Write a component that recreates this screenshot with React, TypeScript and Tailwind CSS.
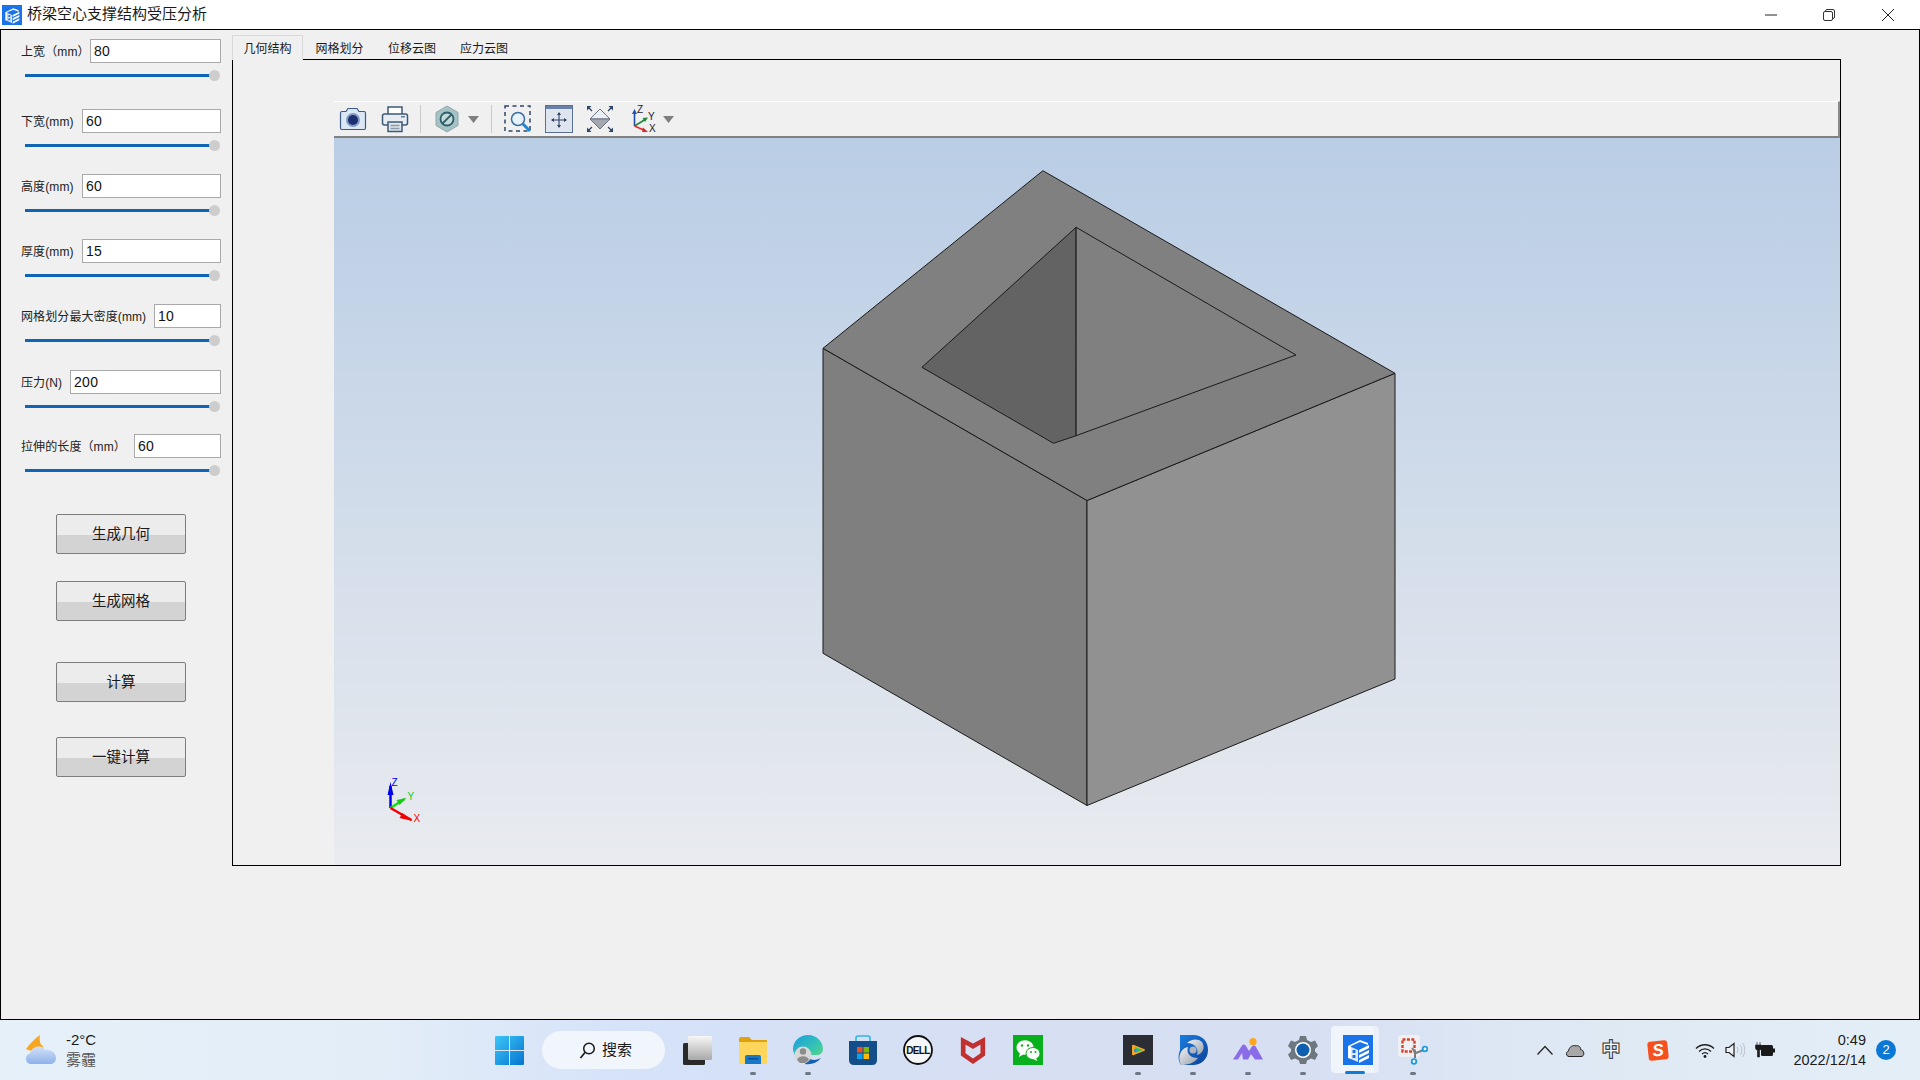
import React from "react";

const FONT = "font-['Liberation_Sans','Noto_Sans_CJK_SC',sans-serif]";

const rows = [
  { label: "上宽（mm）", value: "80", w: "w-[131px]", mt: "mt-[9px]" },
  { label: "下宽(mm)", value: "60", w: "w-[139px]", mt: "mt-[28px]" },
  { label: "高度(mm)", value: "60", w: "w-[139px]", mt: "mt-[23px]" },
  { label: "厚度(mm)", value: "15", w: "w-[139px]", mt: "mt-[23px]" },
  { label: "网格划分最大密度(mm)", value: "10", w: "w-[67px]", mt: "mt-[23px]" },
  { label: "压力(N)", value: "200", w: "w-[151px]", mt: "mt-[24px]" },
  { label: "拉伸的长度（mm）", value: "60", w: "w-[87px]", mt: "mt-[22px]" },
];

const buttons = [
  { label: "生成几何", mt: "mt-[38px]" },
  { label: "生成网格", mt: "mt-[27px]" },
  { label: "计算", mt: "mt-[41px]" },
  { label: "一键计算", mt: "mt-[35px]" },
];

function AppIcon({ className }: { className: string }) {
  return (
    <svg viewBox="0 0 30 30" className={className}>
      <rect width="30" height="30" fill="#1a73e8" />
      <path d="M5 11 L17 5 L25 8 L25 10 L17 7 L8 11 L8 24 L5 23 Z" fill="#fff" />
      <path d="M8 12 L15 15 L15 27 L8 24 Z" fill="#dbe9fb" />
      <rect x="9.5" y="15" width="3" height="3" fill="#1a73e8" />
      <rect x="9.5" y="20" width="3" height="3" fill="#1a73e8" />
      <path d="M16 15 L26 10 L26 13 L16 18 Z M16 20 L26 15 L26 18 L16 23 Z M16 25 L26 20 L26 23 L16 28 Z" fill="#fff" />
    </svg>
  );
}

function Row({ label, value, w, mt }: { label: string; value: string; w: string; mt: string }) {
  return (
    <div className={mt}>
      <div className="flex items-center justify-between">
        <span className="text-[12px] pt-[2px] tracking-[0.1px] text-[#222] whitespace-nowrap">{label}</span>
        <div className={`${w} h-[24px] border border-[#a9a9a9] bg-white pl-[3px] pt-[1px] flex items-center text-[14px] tracking-[0.3px] text-[#111]`}>{value}</div>
      </div>
      <div className="mt-[7px] ml-[4px] w-[195px] h-[11px] flex items-center">
        <div className="flex-1 h-[3px] bg-[#0f64b4]" />
        <div className="w-[11px] h-[11px] -ml-[3px] rounded-full bg-[#cdcdcd] shrink-0" />
      </div>
    </div>
  );
}

function Toolbar() {
  return (
    <div className="h-[37px] shrink-0 bg-[#f0f0f0] border-t border-t-white border-b-2 border-b-[#808080] border-r-2 border-r-[#8a8a8a] flex items-center">
      <svg viewBox="0 0 28 24" className="w-[28px] h-[24px] ml-[5px]">
        <path d="M1.5 6 Q1.5 4.5 3 4.5 L7 4.5 L9 1.5 L18 1.5 L20 4.5 L25 4.5 Q26.5 4.5 26.5 6 L26.5 21 Q26.5 22.5 25 22.5 L3 22.5 Q1.5 22.5 1.5 21 Z" fill="#dce7f4" stroke="#3d5a8a" strokeWidth="1.2" />
        <circle cx="14" cy="13" r="7" fill="#7e9cc6" />
        <circle cx="14" cy="13" r="5" fill="#1d2f70" />
      </svg>
      <svg viewBox="0 0 28 28" className="w-[28px] h-[28px] ml-[14px]">
        <path d="M7 9 L7 2 L21 2 L21 9" fill="#fff" stroke="#3d5a78" strokeWidth="1.5" />
        <rect x="1.5" y="9" width="25" height="11" rx="2" fill="#e8edf2" stroke="#3d5a78" strokeWidth="1.5" />
        <rect x="20" y="11" width="4" height="1.5" fill="#6b7f95" />
        <rect x="7" y="17" width="14" height="9.5" fill="#dfe5ea" stroke="#3d5a78" strokeWidth="1.5" />
        <path d="M9.5 20.5 H18.5 M9.5 23.5 H18.5" stroke="#8a9bad" strokeWidth="1.3" />
      </svg>
      <div className="w-px h-[28px] ml-[11px] bg-[#c9c9c9]" />
      <svg viewBox="0 0 24 28" className="w-[24px] h-[28px] ml-[14px]">
        <path d="M12 1 L23 7.5 L23 20.5 L12 27 L1 20.5 L1 7.5 Z" fill="#a5c2c4" stroke="#8fa9ab" />
        <circle cx="12" cy="14" r="6.5" fill="#c5d8da" stroke="#2f5f68" strokeWidth="1.8" />
        <path d="M7.5 18.5 L16.5 9.5" stroke="#2f5f68" strokeWidth="1.8" />
      </svg>
      <svg viewBox="0 0 11 7" className="w-[11px] h-[7px] ml-[9px]"><path d="M0 0 H11 L5.5 7 Z" fill="#7f7f7f" /></svg>
      <div className="w-px h-[28px] ml-[12px] bg-[#c9c9c9]" />
      <svg viewBox="0 0 27 28" className="w-[27px] h-[28px] ml-[12px]">
        <rect x="1" y="1" width="25" height="25" fill="none" stroke="#2e4468" strokeWidth="1.5" strokeDasharray="4 3.5" />
        <circle cx="14" cy="14" r="6.5" fill="#e8f2fb" stroke="#3a6ea5" strokeWidth="1.5" />
        <path d="M19 19 L26 26" stroke="#1f86d0" strokeWidth="3" />
      </svg>
      <svg viewBox="0 0 28 28" className="w-[28px] h-[28px] ml-[14px]">
        <rect x="0.5" y="0.5" width="27" height="27" fill="#dfe5ee" stroke="#5a6f94" />
        <rect x="1" y="1" width="26" height="3" fill="#6b82a8" />
        <path d="M14 8 V22 M7 15 H21" stroke="#2e4468" strokeWidth="1.1" />
        <path d="M14 7 L12 10 H16 Z M14 23 L12 20 H16 Z M6 15 L9 13 V17 Z M22 15 L19 13 V17 Z" fill="#2e4468" />
      </svg>
      <svg viewBox="0 0 28 28" className="w-[28px] h-[28px] ml-[13px]">
        <path d="M14 4 L24 14 L4 14 Z" fill="#eceff3" stroke="#6a7488" strokeWidth="1" />
        <path d="M4 14 L24 14 L14 24 Z" fill="#a4a8ae" stroke="#6a7488" strokeWidth="1" />
        <path d="M1 1 L5.5 1 L1 5.5 Z M27 1 L22.5 1 L27 5.5 Z M1 27 L5.5 27 L1 22.5 Z M27 27 L22.5 27 L27 22.5 Z" fill="#2e4468" />
        <path d="M2 2 L6 6 M26 2 L22 6 M2 26 L6 22 M26 26 L22 22" stroke="#2e4468" strokeWidth="1.3" />
      </svg>
      <svg viewBox="0 0 28 28" className="w-[28px] h-[28px] ml-[18px] overflow-visible">
        <path d="M2.5 21 V7" stroke="#1f4fb0" strokeWidth="1.6" />
        <path d="M2.5 4 L0 9 H5 Z" fill="#1f4fb0" />
        <path d="M2.5 21 L14 14" stroke="#1f8a3c" strokeWidth="1.6" />
        <path d="M16 12.5 L10.5 13 L13 17 Z" fill="#1f8a3c" />
        <path d="M2.5 21 L14 26" stroke="#e02a2a" strokeWidth="1.6" />
        <path d="M16 27 L11 22.5 L10 27 Z" fill="#e02a2a" />
        <text x="5" y="8" fontSize="10" fontFamily="Liberation Sans" fill="#222">Z</text>
        <text x="16" y="15" fontSize="10" fontFamily="Liberation Sans" fill="#222">Y</text>
        <text x="17" y="27" fontSize="10" fontFamily="Liberation Sans" fill="#222">X</text>
      </svg>
      <svg viewBox="0 0 11 7" className="w-[11px] h-[7px] ml-[3px]"><path d="M0 0 H11 L5.5 7 Z" fill="#7f7f7f" /></svg>
    </div>
  );
}

function Scene() {
  const line = { stroke: "#1a1a1a", strokeWidth: 1, strokeLinejoin: "round" as const };
  return (
    <svg viewBox="334 138 1505 727" className="block w-full flex-1 min-h-0 bg-[linear-gradient(#b9cde5,#e9ebef)]">
      <polygon points="822.5,348.3 1086.5,500.5 1086.5,805.5 822.5,653.3" fill="#7f7f7f" {...line} />
      <polygon points="1086.5,500.5 1394.5,373.3 1394.5,679 1086.5,805.5" fill="#919191" {...line} />
      <polygon points="1042.4,170.7 1394.5,373.3 1086.5,500.5 822.5,348.3" fill="#808080" {...line} />
      <polygon points="1075.6,227.3 921.4,367.3 1053,443.3 1075.6,435.7" fill="#636363" {...line} />
      <polygon points="1075.6,227.3 1295.5,355 1075.6,435.7" fill="#808080" {...line} />
      <path d="M390 808 V786" stroke="#0000f0" strokeWidth="2.5" />
      <path d="M390 782 L387 795 H393 Z" fill="#0000f0" />
      <path d="M390 808 L404 799" stroke="#10e010" strokeWidth="2.5" />
      <path d="M406 798 L396 800 L399 805 Z" fill="#10d010" />
      <path d="M390 808 L411 820" stroke="#f00000" strokeWidth="2.5" />
      <path d="M412 821 L402 813 L399 818 Z" fill="#f00000" />
      <text x="391" y="786" fontSize="10" fontFamily="Liberation Sans" fill="#0000f0">Z</text>
      <text x="407" y="800" fontSize="10" fontFamily="Liberation Sans" fill="#10d010">Y</text>
      <text x="413" y="822" fontSize="10" fontFamily="Liberation Sans" fill="#f00000">X</text>
    </svg>
  );
}

function Dot() {
  return <div className="absolute left-1/2 -translate-x-1/2 top-[52px] w-[6px] h-[3px] rounded-full bg-[#6d7684]" />;
}

function Slot({ children, dot }: { children?: React.ReactNode; dot?: boolean }) {
  return (
    <div className="relative w-[55px] h-[60px] flex items-center justify-center shrink-0">
      {children}
      {dot && <Dot />}
    </div>
  );
}

function TaskIcons() {
  return (
    <div className="flex ml-[13px]">
      <Slot dot>
        <svg viewBox="0 0 30 30" className="w-[30px] h-[30px]">
          <path d="M1 4 Q1 2 3 2 L11 2 L14 5 L29 5 L29 10 L1 10 Z" fill="#e0a20a" />
          <path d="M1 7 H29 V28 Q29 29 28 29 H2 Q1 29 1 28 Z" fill="#ffd65c" />
          <path d="M7 29 V22 Q7 20 9 20 H21 Q23 20 23 22 V29 Z" fill="#1878c8" />
          <rect x="10" y="23" width="10" height="1.5" fill="#0c4f90" />
        </svg>
      </Slot>
      <Slot dot>
        <svg viewBox="0 0 30 30" className="w-[30px] h-[30px]">
          <defs>
            <linearGradient id="edgeg" x1="0" y1="0" x2="1" y2="1"><stop offset="0" stopColor="#1b9de2" /><stop offset="0.6" stopColor="#36c5b0" /><stop offset="1" stopColor="#6fdc6e" /></linearGradient>
          </defs>
          <path d="M15 0 C24 0 30 7 30 14 C30 18 27 20 24 20 L14 20 L8 26 C2 22 0 17 0 14 C0 6 7 0 15 0 Z" fill="url(#edgeg)" />
          <path d="M12 29 C18 30 24 28 28 23 C22 26 18 25 15 23 Z" fill="#1560b0" />
          <circle cx="10" cy="20" r="8.5" fill="#d8d8d8" />
          <circle cx="10" cy="16.5" r="3.2" fill="#8c8c8c" />
          <path d="M4 25 C5 20 15 20 16 25 L12 28 L7 28 Z" fill="#8c8c8c" />
        </svg>
      </Slot>
      <Slot>
        <svg viewBox="0 0 30 30" className="w-[30px] h-[30px]">
          <path d="M8 7 V3 Q8 1 10 1 H20 Q22 1 22 3 V7" fill="none" stroke="#2db4ea" strokeWidth="1.6" />
          <path d="M1 6 H29 V25 Q29 30 24 30 H6 Q1 30 1 25 Z" fill="#134d8a" />
          <rect x="9" y="12" width="5.5" height="5.5" fill="#f25022" />
          <rect x="15.5" y="12" width="5.5" height="5.5" fill="#7fba00" />
          <rect x="9" y="18.5" width="5.5" height="5.5" fill="#00a4ef" />
          <rect x="15.5" y="18.5" width="5.5" height="5.5" fill="#ffb900" />
        </svg>
      </Slot>
      <Slot>
        <svg viewBox="0 0 30 30" className="w-[30px] h-[30px]">
          <circle cx="15" cy="15" r="14" fill="#f4f6f8" stroke="#111" strokeWidth="1.8" />
          <text x="15" y="18.5" textAnchor="middle" fontSize="10" fontWeight="700" fontFamily="Liberation Sans" fill="#111" letterSpacing="-0.6">DELL</text>
        </svg>
      </Slot>
      <Slot>
        <svg viewBox="0 0 30 30" className="w-[28px] h-[30px]">
          <path d="M2 1 L15 8 L28 1 L28 21 L15 30 L2 21 Z M7 9 L7 18.5 L15 24 L23 18.5 L23 9 L15 14 Z" fill="#c22f2f" fillRule="evenodd" />
        </svg>
      </Slot>
      <Slot>
        <svg viewBox="0 0 30 30" className="w-[30px] h-[30px]">
          <rect width="30" height="30" fill="#09b01e" />
          <ellipse cx="12" cy="12.5" rx="8.5" ry="7.3" fill="#fff" />
          <path d="M7 18 L6 22 L11 19 Z" fill="#fff" />
          <ellipse cx="20" cy="18.5" rx="7" ry="6" fill="#fff" stroke="#09b01e" />
          <path d="M23 23 L24.5 26 L20 24 Z" fill="#fff" />
          <circle cx="9" cy="10.5" r="1.2" fill="#09b01e" /><circle cx="15" cy="10.5" r="1.2" fill="#09b01e" />
          <circle cx="18" cy="17" r="1" fill="#09b01e" /><circle cx="22.5" cy="17" r="1" fill="#09b01e" />
        </svg>
      </Slot>
      <Slot />
      <Slot dot>
        <svg viewBox="0 0 30 30" className="w-[30px] h-[30px]">
          <rect width="30" height="30" fill="#2a2d33" />
          <path d="M9 11 Q9 9 11 10 L21 14 Q23 15 21 16 L11 20 Q9 21 9 19 Z" fill="#f5a623" />
          <path d="M12 12 L20 15 L12 18 Z" fill="#2fc36a" />
          <path d="M11 14 L15 15 L11 17 Z" fill="#2b8be8" />
        </svg>
      </Slot>
      <Slot dot>
        <svg viewBox="0 0 30 30" className="w-[30px] h-[30px]">
          <defs>
            <linearGradient id="swg" x1="0" y1="0" x2="1" y2="1"><stop offset="0" stopColor="#1b7fe0" /><stop offset="1" stopColor="#0d3f9a" /></linearGradient>
            <linearGradient id="swh" x1="0" y1="0" x2="1" y2="1"><stop offset="0" stopColor="#eef1f5" /><stop offset="1" stopColor="#9aa2ad" /></linearGradient>
          </defs>
          <path d="M2 0 H15 C25 0 30 7 30 15 C30 24 23 30 15 30 H3 C0 26 0 20 2 15 Z" fill="url(#swg)" />
          <path d="M3 30 C-1 22 3 13 10 12 C8 18 12 23 20 23 C16 28 10 30 3 30 Z" fill="url(#swh)" />
          <path d="M24 7 C28 13 24 19 19 20 C21 14 17 8 9 8 C13 4 20 3 24 7 Z" fill="url(#swh)" />
          <circle cx="15" cy="15" r="3.5" fill="#aeb5c0" />
        </svg>
      </Slot>
      <Slot dot>
        <svg viewBox="0 0 30 30" className="w-[30px] h-[30px]">
          <circle cx="20" cy="6.7" r="3.6" fill="#fba81b" />
          <path d="M0 24.5 L9 10.5 Q11 8.5 13 11 L16 16 L19 11.5 Q21 9.5 23 12 L30 24.5 L22 24.5 L18 19 L15 24.5 L10 24.5 L9 18 L5 24.5 Z" fill="#8b6ce8" />
        </svg>
      </Slot>
      <Slot dot>
        <svg viewBox="0 0 30 30" className="w-[30px] h-[30px]">
          <path d="M12 1 H18 L19 5 L23 7 L27 5.5 L30 11 L27 14 V16.5 L30 19.5 L27 25 L23 23.5 L19 25.5 L18 29 H12 L11 25.5 L7 23.5 L3 25 L0 19.5 L3 16.5 V14 L0 11 L3 5.5 L7 7 L11 5 Z" fill="#6e7680" />
          <circle cx="15" cy="15" r="8" fill="#fff" />
          <circle cx="15" cy="15" r="6.5" fill="#0f5fb0" />
        </svg>
      </Slot>
      <Slot>
        <div className="absolute top-[6px] left-[4px] w-[45px] h-[47px] rounded-[4px] bg-[#eaf0fa]" />
        <div className="absolute top-[6px] left-[1px] w-[43px] h-[47px] rounded-[4px] bg-[#f0f4fb]" />
        <AppIcon className="relative w-[30px] h-[30px]" />
        <div className="absolute left-[15px] top-[51px] w-[20px] h-[3px] rounded-full bg-[#0f7bd4]" />
      </Slot>
      <Slot dot>
        <svg viewBox="0 0 30 30" className="w-[30px] h-[30px]">
          <rect width="22" height="22" rx="3" fill="#eef0f3" />
          <rect x="4.5" y="4.5" width="12" height="12" fill="none" stroke="#d8402a" strokeWidth="2.4" strokeDasharray="3 1.4" />
          <path d="M14 13 L18 18 L28 14" fill="none" stroke="#7c7c7c" strokeWidth="2" />
          <path d="M17 16 L17 23" stroke="#7c7c7c" strokeWidth="2" />
          <circle cx="27" cy="14" r="2.3" fill="#fff" stroke="#1d9be0" strokeWidth="1.8" />
          <circle cx="16" cy="26.5" r="2.3" fill="#fff" stroke="#1d9be0" strokeWidth="1.8" />
        </svg>
      </Slot>
    </div>
  );
}

function Tray() {
  return (
    <div className="flex items-center ml-[97px] text-[#1a1a1a]">
      <svg viewBox="0 0 16 10" className="w-[16px] h-[10px]"><path d="M0.5 9.5 L8 1.5 L15.5 9.5" fill="none" stroke="#222" strokeWidth="1.2" /></svg>
      <svg viewBox="0 0 20 13" className="w-[20px] h-[13px] ml-[12px]">
        <path d="M4 12.5 C1 12.5 0.5 8 3.5 7 C4 3 8 0.5 11 2 C13 0.8 16 3 15.5 5.5 C19 5.5 20.5 12.5 16 12.5 Z" fill="#a8a8a8" stroke="#222" strokeWidth="1" />
      </svg>
      <span className="w-[17px] ml-[17px] text-[18px] leading-none text-white [-webkit-text-stroke:2.5px_#444] [paint-order:stroke_fill] text-center">中</span>
      <div className="w-[20px] h-[19px] ml-[29px] rounded-[3px] bg-[#f4511e] -rotate-6 flex items-center justify-center text-white text-[17px] font-bold italic leading-none">S</div>
      <svg viewBox="0 0 20 15" className="w-[20px] h-[15px] ml-[27px]">
        <path d="M1 5.5 C6 0.5 14 0.5 19 5.5 M4 8.5 C7.5 5 12.5 5 16 8.5 M7 11 C8.8 9.4 11.2 9.4 13 11" fill="none" stroke="#1d1d1d" strokeWidth="1.3" />
        <circle cx="10" cy="13.5" r="1.4" fill="#1d1d1d" />
      </svg>
      <svg viewBox="0 0 20 16" className="w-[20px] h-[16px] ml-[10px]">
        <path d="M1 5.5 H4 L9 1.5 V14.5 L4 10.5 H1 Z" fill="#eef3f9" stroke="#1d1d1d" strokeWidth="1.2" />
        <path d="M12 5 C13.3 6.5 13.3 9.5 12 11 M15 3 C17.5 5.5 17.5 10.5 15 13 M17.5 1 C20.5 5 20.5 11 17.5 15" fill="none" stroke="#b9bec6" strokeWidth="1" />
      </svg>
      <svg viewBox="0 0 20 16" className="w-[20px] h-[16px] ml-[10px]">
        <path d="M2 0 V3 M5 0 V3 M0.5 3 H6.5 V6 Q6.5 8 4.5 8 V15 H2.5 V8 Q0.5 8 0.5 6 Z" fill="#1a1a1a" stroke="#1a1a1a" strokeWidth="0.6" />
        <rect x="6" y="3" width="12" height="11" rx="1.5" fill="#1a1a1a" />
        <rect x="18" y="6.5" width="2" height="4" fill="#1a1a1a" />
      </svg>
      <div className="w-[80px] ml-[11px] text-right text-[14.5px] leading-[20px] text-[#1c1c1c]">
        <div>0:49</div>
        <div>2022/12/14</div>
      </div>
      <div className="w-[20px] h-[20px] ml-[10px] rounded-full bg-[#0b78d6] text-white text-[13px] flex items-center justify-center">2</div>
    </div>
  );
}

export default function App() {
  return (
    <div className={`${FONT} w-[1920px] h-[1080px] overflow-hidden flex flex-col bg-[#f0f0f0]`}>
      <div className="h-[29px] shrink-0 bg-white flex items-center text-[#1a1a1a]">
        <AppIcon className="w-[20px] h-[20px] ml-[2px]" />
        <span className="ml-[5px] text-[15px]">桥梁空心支撑结构受压分析</span>
        <svg viewBox="0 0 12 12" className="w-[12px] h-[12px] ml-auto"><path d="M0 6 H12" stroke="#222" strokeWidth="1" /></svg>
        <svg viewBox="0 0 12 12" className="w-[12px] h-[12px] ml-[46px]">
          <rect x="0.5" y="2.5" width="9" height="9" rx="1.5" fill="none" stroke="#333" />
          <path d="M2.5 2 V1.8 Q2.5 0.5 4 0.5 H10 Q11.5 0.5 11.5 2 V8 Q11.5 9.5 10 9.5" fill="none" stroke="#333" />
        </svg>
        <svg viewBox="0 0 12 12" className="w-[12px] h-[12px] ml-[47px] mr-[26px]"><path d="M0 0 L12 12 M12 0 L0 12" stroke="#222" strokeWidth="1" /></svg>
      </div>

      <div className="flex-1 min-h-0 border border-black flex">
        <div className="w-[231px] shrink-0 pl-[20px] pr-[11px]">
          {rows.map((r) => (
            <Row key={r.label} {...r} />
          ))}
          {buttons.map((b) => (
            <div
              key={b.label}
              className={`${b.mt} ml-[35px] w-[130px] h-[40px] pt-[2px] border border-[#7d7d7d] rounded-[2px] bg-[linear-gradient(#ececec_52%,#d3d3d3_52%)] flex items-center justify-center text-[14.5px] text-[#1a1a1a]`}
            >
              {b.label}
            </div>
          ))}
        </div>

        <div className="w-[1609px] shrink-0 pt-[5px]">
          <div className="h-[25px] flex relative text-[12px] text-[#1a1a1a]">
            <div className="w-[71px] h-[25px] pt-[2px] border border-[#d9d9d9] border-b-0 flex items-center justify-center relative z-10 bg-[#f0f0f0]">几何结构</div>
            <div className="w-[73px] pt-[2px] flex items-center justify-center">网格划分</div>
            <div className="w-[72px] pt-[2px] flex items-center justify-center">位移云图</div>
            <div className="w-[72px] pt-[2px] flex items-center justify-center">应力云图</div>
          </div>
          <div className="-mt-px h-[807px] border border-black pl-[101px] pt-[41px] flex flex-col">
            <Toolbar />
            <Scene />
          </div>
        </div>
      </div>

      <div className="h-[60px] shrink-0 flex items-center bg-[linear-gradient(90deg,#e6f0f9_0%,#e3edf8_20%,#d5e2f8_33%,#d6dff3_50%,#d7dff2_68%,#dee8f4_80%,#e4eef7_100%)]">
        <div className="w-[495px] shrink-0 flex items-center pl-[25px]">
          <svg viewBox="0 0 31 30" className="w-[31px] h-[30px]">
            <defs>
              <linearGradient id="cl" x1="0" y1="0" x2="0" y2="1"><stop offset="0" stopColor="#d4e1f6" /><stop offset="1" stopColor="#8db2ec" /></linearGradient>
            </defs>
            <path d="M15 0 C11 3 5 8 1 14 C6 17 14 16 19 12 C15 10 14 5 15 0 Z" fill="#f5a623" />
            <path d="M6 29 C0 29 -1 20 5 18.5 C6 11 18 9 20 15 C26 14 31 18 31 23 C31 27 28 29 25 29 Z" fill="url(#cl)" />
          </svg>
          <div className="ml-[10px] text-[15px] leading-[20px]">
            <div className="text-[#1c1c1c]">-2°C</div>
            <div className="text-[#555]">雾霾</div>
          </div>
        </div>
        <svg viewBox="0 0 29 29" className="w-[29px] h-[29px] shrink-0">
          <defs>
            <linearGradient id="win" x1="0" y1="0" x2="1" y2="1"><stop offset="0" stopColor="#3cc6f8" /><stop offset="1" stopColor="#0674d0" /></linearGradient>
          </defs>
          <path d="M1 0 H14 V14 H0 V1 Q0 0 1 0 Z M15 0 H28 Q29 0 29 1 V14 H15 Z M0 15 H14 V29 H1 Q0 29 0 28 Z M15 15 H29 V28 Q29 29 28 29 H15 Z" fill="url(#win)" />
        </svg>
        <div className="ml-[18px] w-[123px] h-[38px] pl-[37px] rounded-full bg-[#f1f5fc] flex items-center shrink-0">
          <svg viewBox="0 0 16 17" className="w-[17px] h-[17px] mr-[6px]">
            <circle cx="9.5" cy="6.5" r="5.3" fill="none" stroke="#1a1a1a" strokeWidth="1.5" />
            <path d="M5.5 10.5 L1 16" stroke="#1a1a1a" strokeWidth="1.7" />
          </svg>
          <span className="text-[15px] text-[#1a1a1a]">搜索</span>
        </div>
        <svg viewBox="0 0 29 29" className="ml-[18px] w-[29px] h-[29px] shrink-0">
          <defs>
            <linearGradient id="tv" x1="0" y1="0" x2="0" y2="1"><stop offset="0" stopColor="#f7f7f7" /><stop offset="1" stopColor="#a8a8a8" /></linearGradient>
          </defs>
          <rect x="0" y="7" width="22" height="22" rx="1.5" fill="#2a2a2a" />
          <rect x="5" y="0" width="24" height="24" rx="1.5" fill="url(#tv)" />
        </svg>
        <TaskIcons />
        <Tray />
      </div>
    </div>
  );
}
